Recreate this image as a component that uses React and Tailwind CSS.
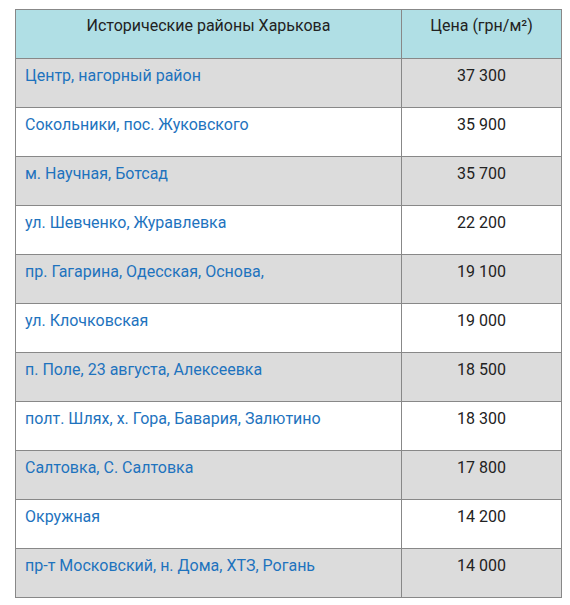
const rows = [
  ["Центр, нагорный район", "37 300"],
  ["Сокольники, пос. Жуковского", "35 900"],
  ["м. Научная, Ботсад", "35 700"],
  ["ул. Шевченко, Журавлевка", "22 200"],
  ["пр. Гагарина, Одесская, Основа,", "19 100"],
  ["ул. Клочковская", "19 000"],
  ["п. Поле, 23 августа, Алексеевка", "18 500"],
  ["полт. Шлях, х. Гора, Бавария, Залютино", "18 300"],
  ["Салтовка, С. Салтовка", "17 800"],
  ["Окружная", "14 200"],
  ["пр-т Московский, н. Дома, ХТЗ, Рогань", "14 000"],
];

export default function App() {
  return (
    <div className="bg-white min-h-[605px] pt-[9px] pl-[15px] font-['Roboto',sans-serif] text-[16px] text-[#222]">
      <table className="w-[547px] border-collapse border border-[#333] table-fixed">
        <colgroup>
          <col className="w-[386px]" />
          <col />
        </colgroup>
        <thead>
          <tr className="bg-[#b0dfe5] h-[49px]">
            <th className="border border-[#888] align-top font-normal text-center pt-[4px] px-[10px] leading-[24px]">
              Исторические районы Харькова
            </th>
            <th className="border border-[#888] align-top font-normal text-center pt-[4px] px-[10px] leading-[24px]">
              Цена (грн/м²)
            </th>
          </tr>
        </thead>
        <tbody>
          {rows.map(([name, price], i) => (
            <tr key={name} className={i % 2 === 0 ? "bg-[#dcdcdc] h-[49px]" : "bg-white h-[49px]"}>
              <td className="border border-[#888] align-top pt-[5px] pl-[9px] pr-[10px] leading-[24px] text-[#1e73be]">
                {name}
              </td>
              <td className="border border-[#888] align-top pt-[5px] px-[10px] leading-[24px] text-center">
                {price}
              </td>
            </tr>
          ))}
        </tbody>
      </table>
    </div>
  );
}
